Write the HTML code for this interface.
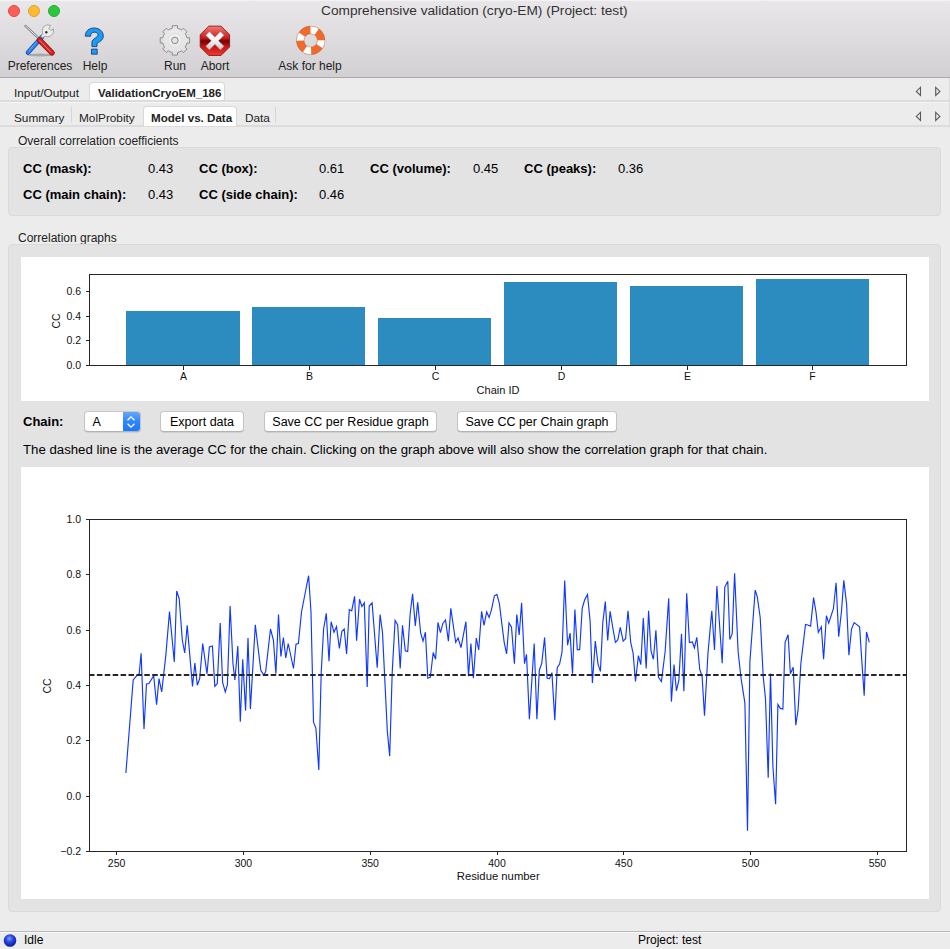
<!DOCTYPE html>
<html><head><meta charset="utf-8">
<style>
*{box-sizing:border-box}
html,body{margin:0;padding:0;width:950px;height:949px;overflow:hidden;background:#ececec;font-family:"Liberation Sans",sans-serif;color:#000}
.a{position:absolute;white-space:nowrap}
#toolbar{position:absolute;left:0;top:0;width:950px;height:78px;background:linear-gradient(#e9e7e9,#d2d0d2);border-bottom:1px solid #a9a7a9;box-shadow:inset 0 1px 0 #f4f3f4}
.tl{position:absolute;top:5px;width:12px;height:12px;border-radius:50%}
.lbl{position:absolute;top:59px;font-size:12px;color:#222;text-align:center}
#tabs1{position:absolute;left:0;top:78px;width:950px;height:24px;background:#ececec;border-bottom:2px solid #dcdcdc}
#tabs2{position:absolute;left:0;top:102px;width:950px;height:25px;background:#ececec;border-top:1px solid #f6f6f6;border-bottom:2px solid #dcdcdc}
.tab{position:absolute;font-size:11.8px;color:#222}
.atab{position:absolute;background:#fff;border:1px solid #d8d8d8;border-bottom:none;border-radius:4px 4px 0 0}
.grp{position:absolute;background:#e3e3e3;border:1px solid #dadada;border-radius:4px}
.gt{position:absolute;font-size:12px;color:#222}
.panel{position:absolute;background:#fff}
.b{font-weight:bold}
.cc{position:absolute;font-size:13px}
.tk{font-size:10.5px;fill:#111;font-family:"Liberation Sans",sans-serif}
.btn{position:absolute;height:21px;background:#fff;border:1px solid #c3c3c3;border-radius:4px;font-size:12.5px;text-align:center;line-height:20px;box-shadow:0 0.5px 0.5px #bdbdbd;border-color:#c8c8c8 #c3c3c3 #b3b3b3}
</style></head>
<body>
<div id="toolbar">
  <div class="tl" style="left:8px;background:#fc5f57;border:1px solid #df4744"></div>
  <div class="tl" style="left:28px;background:#fdbc2e;border:1px solid #de9f34"></div>
  <div class="tl" style="left:48px;background:#29c83f;border:1px solid #27aa35"></div>
  <div class="a" style="left:321px;top:3px;font-size:13.7px;color:#333">Comprehensive validation (cryo-EM) (Project: test)</div>
  <svg class="a" style="left:0;top:0" width="400" height="78">
<defs>
<linearGradient id="gBlue" x1="0" y1="0" x2="1" y2="1"><stop offset="0" stop-color="#4aa0ff"/><stop offset="1" stop-color="#0b4fc4"/></linearGradient>
<linearGradient id="gRed" x1="0" y1="0" x2="1" y2="0"><stop offset="0" stop-color="#f04848"/><stop offset="1" stop-color="#a80d0d"/></linearGradient>
<radialGradient id="gGear" cx="0.5" cy="0.45" r="0.6"><stop offset="0" stop-color="#f6f6f6"/><stop offset="1" stop-color="#dadada"/></radialGradient>
<linearGradient id="gOct" x1="0" y1="0" x2="0" y2="1"><stop offset="0" stop-color="#f47a7a"/><stop offset="0.42" stop-color="#c81818"/><stop offset="0.51" stop-color="#6a0000"/><stop offset="0.66" stop-color="#c01010"/><stop offset="1" stop-color="#f03a30"/></linearGradient>
<linearGradient id="gX" x1="0" y1="0" x2="0" y2="1"><stop offset="0" stop-color="#ffffff"/><stop offset="0.5" stop-color="#f4f4f4"/><stop offset="1" stop-color="#c4c4c4"/></linearGradient>
<radialGradient id="gBall" cx="0.4" cy="0.35" r="0.65"><stop offset="0" stop-color="#6f8dff"/><stop offset="0.5" stop-color="#1d3fe0"/><stop offset="1" stop-color="#0a1a90"/></radialGradient>
</defs>
<!-- preferences -->
<ellipse cx="40" cy="55" rx="13" ry="1.5" fill="#000" opacity="0.22"/>
<line x1="25.5" y1="26" x2="39.5" y2="39" stroke="#707070" stroke-width="2.3" stroke-linecap="round"/>
<line x1="25.5" y1="26" x2="39.5" y2="39" stroke="#f4f4f4" stroke-width="1" stroke-linecap="round"/>
<line x1="42" y1="37" x2="28" y2="52.5" stroke="#0a4ab8" stroke-width="4.6" stroke-linecap="round"/>
<line x1="42" y1="37" x2="28" y2="52.5" stroke="#2f86f0" stroke-width="3" stroke-linecap="round"/>
<line x1="40.5" y1="37.8" x2="29" y2="50.5" stroke="#8cc4ff" stroke-width="0.8" opacity="0.7"/>
<path transform="translate(-1,0.3)" d="M44.5 26.5 Q47.5 23.5 51.5 25 L49.8 28.2 L51.8 30.2 L54.5 28.6 Q55.5 33 51.8 35.6 Q48.5 37.5 45.8 35.8 L43.6 37.6 L41.8 35.8 L43.8 33.6 Q42.2 30 44.5 26.5 Z" fill="#ececec" stroke="#8a8a8a" stroke-width="0.7"/>
<circle cx="46.3" cy="32.3" r="1.2" fill="#333"/>
<line x1="39.5" y1="40" x2="52" y2="52.8" stroke="#8a0a0a" stroke-width="5.4" stroke-linecap="round"/>
<line x1="39.5" y1="40" x2="52" y2="52.8" stroke="#d82424" stroke-width="4" stroke-linecap="round"/>
<line x1="39.5" y1="40.3" x2="51" y2="52.2" stroke="#ffb0b0" stroke-width="0.7" opacity="0.85"/>
<!-- help -->
<g transform="translate(75,20)">
<path d="M10.3 16.2 C10.3 11 14 8 19 8 C24.5 8 28.3 11.5 28.3 16 C28.3 19.5 26 21 22 23.5 L22 26.6 L16.9 26.6 L16.9 22.5 C16.9 20 19 19 21 17.6 C22.5 16.5 23 15.8 23 14.8 C23 13 21.2 12.2 19.2 12.2 C17 12.2 15.6 13.8 15.6 16.2 Z" fill="#1a9cf4" stroke="#10306a" stroke-width="0.8"/>
<path d="M16.5 29.1 H22.2 V34.2 H16.5 Z" fill="#1a9cf4" stroke="#10306a" stroke-width="0.8"/>
</g>
<!-- run gear -->
<g transform="translate(174.9,40.4)">
<path d="M-2.60 -12.12 L-2.60 -14.70 L2.60 -14.70 L2.60 -12.12 A12.4 12.4 0 0 1 6.73 -10.41 L6.73 -10.41 L8.56 -12.23 L12.23 -8.56 L10.41 -6.73 A12.4 12.4 0 0 1 12.12 -2.60 L12.12 -2.60 L14.70 -2.60 L14.70 2.60 L12.12 2.60 A12.4 12.4 0 0 1 10.41 6.73 L10.41 6.73 L12.23 8.56 L8.56 12.23 L6.73 10.41 A12.4 12.4 0 0 1 2.60 12.12 L2.60 12.12 L2.60 14.70 L-2.60 14.70 L-2.60 12.12 A12.4 12.4 0 0 1 -6.73 10.41 L-6.73 10.41 L-8.56 12.23 L-12.23 8.56 L-10.41 6.73 A12.4 12.4 0 0 1 -12.12 2.60 L-12.12 2.60 L-14.70 2.60 L-14.70 -2.60 L-12.12 -2.60 A12.4 12.4 0 0 1 -10.41 -6.73 L-10.41 -6.73 L-12.23 -8.56 L-8.56 -12.23 L-6.73 -10.41 A12.4 12.4 0 0 1 -2.60 -12.12 Z" fill="url(#gGear)" stroke="#858585" stroke-width="0.9" stroke-linejoin="round"/>
<circle r="7.2" fill="none" stroke="#e2e2e2" stroke-width="1.6"/>
<circle r="3.3" fill="#e4e4e4" stroke="#7a7a7a" stroke-width="0.9"/>
</g>
<!-- abort -->
<g transform="translate(214.9,40.8)">
<polygon points="-6.1,-14.7 6.1,-14.7 14.7,-6.1 14.7,6.1 6.1,14.7 -6.1,14.7 -14.7,6.1 -14.7,-6.1" stroke-linejoin="round" fill="url(#gOct)" stroke="#7a1010" stroke-width="0.8"/>
<path d="M-8.5 -5.2 L-5.2 -8.5 L0 -3.3 L5.2 -8.5 L8.5 -5.2 L3.3 0 L8.5 5.2 L5.2 8.5 L0 3.3 L-5.2 8.5 L-8.5 5.2 L-3.3 0 Z" fill="url(#gX)" stroke="#b8b8b8" stroke-width="0.4" transform="scale(1.06)"/>
</g>
<!-- lifebuoy -->
<g transform="translate(310.7,40.4)">
<circle r="10.5" fill="none" stroke="#f06a2c" stroke-width="7.6"/>
<circle r="10.5" fill="none" stroke="#ffffff" stroke-width="7.6" stroke-dasharray="6.6 9.89" stroke-dashoffset="3.3" transform="rotate(15)"/>
<circle r="14.3" fill="none" stroke="#a05a40" stroke-width="0.6" opacity="0.6"/>
<circle r="6.7" fill="none" stroke="#a05a40" stroke-width="0.6" opacity="0.6"/>
</g>
</svg>
  <div class="lbl" style="left:0;width:80px">Preferences</div>
  <div class="lbl" style="left:75px;width:40px">Help</div>
  <div class="lbl" style="left:155px;width:40px">Run</div>
  <div class="lbl" style="left:190px;width:50px">Abort</div>
  <div class="lbl" style="left:260px;width:100px">Ask for help</div>
</div>
<div id="tabs1">
  <div class="tab" style="left:14px;top:8px">Input/Output</div>
  <div class="atab" style="left:89px;top:4px;width:136px;height:18px"></div>
  <div class="tab b" style="left:98px;top:9px;font-size:11.5px">ValidationCryoEM_186</div>
</div>
<div id="tabs2">
  <div class="tab" style="left:14px;top:8px">Summary</div>
  <div style="position:absolute;left:71px;top:4px;width:1px;height:16px;background:#d6d6d6"></div>
  <div class="tab" style="left:79px;top:8px">MolProbity</div>
  <div class="atab" style="left:143px;top:3px;width:94px;height:20px"></div>
  <div class="tab b" style="left:151px;top:8px;font-size:11.6px">Model vs. Data</div>
  <div class="tab" style="left:245px;top:8px">Data</div>
  <div style="position:absolute;left:275px;top:4px;width:1px;height:16px;background:#d6d6d6"></div>
</div>
<div class="gt" style="left:18px;top:134px">Overall correlation coefficients</div>
<div class="grp" style="left:8px;top:147px;width:933px;height:69px"></div>
<div class="cc b" style="left:23px;top:161px">CC (mask):</div>
<div class="cc" style="left:148px;top:161px">0.43</div>
<div class="cc b" style="left:199px;top:161px">CC (box):</div>
<div class="cc" style="left:319px;top:161px">0.61</div>
<div class="cc b" style="left:370px;top:161px">CC (volume):</div>
<div class="cc" style="left:473px;top:161px">0.45</div>
<div class="cc b" style="left:524px;top:161px">CC (peaks):</div>
<div class="cc" style="left:618px;top:161px">0.36</div>
<div class="cc b" style="left:23px;top:187px">CC (main chain):</div>
<div class="cc" style="left:148px;top:187px">0.43</div>
<div class="cc b" style="left:199px;top:187px">CC (side chain):</div>
<div class="cc" style="left:319px;top:187px">0.46</div>

<div class="gt" style="left:18px;top:231px">Correlation graphs</div>
<div class="grp" style="left:8px;top:244px;width:933px;height:668px"></div>
<div class="panel" style="left:21px;top:257px;width:908px;height:144px"></div>
<div class="panel" style="left:21px;top:467px;width:908px;height:432px"></div>

<!--CHARTS-->
<svg class="a" style="left:0;top:0" width="950" height="949">
<rect x="126" y="311" width="114" height="54" fill="#2c8bbf"/>
<rect x="252" y="307" width="113" height="58" fill="#2c8bbf"/>
<rect x="378" y="318" width="113" height="47" fill="#2c8bbf"/>
<rect x="504" y="282" width="113" height="83" fill="#2c8bbf"/>
<rect x="630" y="286" width="113" height="79" fill="#2c8bbf"/>
<rect x="756" y="279" width="113" height="86" fill="#2c8bbf"/>
<rect x="89.5" y="274.5" width="817" height="91" fill="none" stroke="#262626" stroke-width="1"/>
<line x1="86" y1="365.5" x2="89.5" y2="365.5" stroke="#262626"/>
<text x="81" y="369.3" text-anchor="end" class="tk">0.0</text>
<line x1="86" y1="340.5" x2="89.5" y2="340.5" stroke="#262626"/>
<text x="81" y="344.3" text-anchor="end" class="tk">0.2</text>
<line x1="86" y1="316.5" x2="89.5" y2="316.5" stroke="#262626"/>
<text x="81" y="320.3" text-anchor="end" class="tk">0.4</text>
<line x1="86" y1="291.5" x2="89.5" y2="291.5" stroke="#262626"/>
<text x="81" y="295.3" text-anchor="end" class="tk">0.6</text>
<line x1="183.5" y1="365.5" x2="183.5" y2="370" stroke="#262626"/>
<text x="183.5" y="380" text-anchor="middle" class="tk">A</text>
<line x1="309.5" y1="365.5" x2="309.5" y2="370" stroke="#262626"/>
<text x="309.5" y="380" text-anchor="middle" class="tk">B</text>
<line x1="435.5" y1="365.5" x2="435.5" y2="370" stroke="#262626"/>
<text x="435.5" y="380" text-anchor="middle" class="tk">C</text>
<line x1="561.5" y1="365.5" x2="561.5" y2="370" stroke="#262626"/>
<text x="561.5" y="380" text-anchor="middle" class="tk">D</text>
<line x1="687.5" y1="365.5" x2="687.5" y2="370" stroke="#262626"/>
<text x="687.5" y="380" text-anchor="middle" class="tk">E</text>
<line x1="812.5" y1="365.5" x2="812.5" y2="370" stroke="#262626"/>
<text x="812.5" y="380" text-anchor="middle" class="tk">F</text>
<text x="498" y="394" text-anchor="middle" class="tk" style="font-size:11px">Chain ID</text>
<text transform="translate(60,321) rotate(-90)" text-anchor="middle" class="tk">CC</text>
<rect x="89.5" y="519.5" width="817" height="332" fill="none" stroke="#262626" stroke-width="1"/>
<line x1="86" y1="519.5" x2="89.5" y2="519.5" stroke="#262626"/>
<text x="81" y="523.3" text-anchor="end" class="tk">1.0</text>
<line x1="86" y1="574.5" x2="89.5" y2="574.5" stroke="#262626"/>
<text x="81" y="578.3" text-anchor="end" class="tk">0.8</text>
<line x1="86" y1="630.5" x2="89.5" y2="630.5" stroke="#262626"/>
<text x="81" y="634.3" text-anchor="end" class="tk">0.6</text>
<line x1="86" y1="685.5" x2="89.5" y2="685.5" stroke="#262626"/>
<text x="81" y="689.3" text-anchor="end" class="tk">0.4</text>
<line x1="86" y1="740.5" x2="89.5" y2="740.5" stroke="#262626"/>
<text x="81" y="744.3" text-anchor="end" class="tk">0.2</text>
<line x1="86" y1="796.5" x2="89.5" y2="796.5" stroke="#262626"/>
<text x="81" y="800.3" text-anchor="end" class="tk">0.0</text>
<line x1="86" y1="851.5" x2="89.5" y2="851.5" stroke="#262626"/>
<text x="81" y="855.3" text-anchor="end" class="tk">−0.2</text>
<line x1="116.5" y1="851.5" x2="116.5" y2="855" stroke="#262626"/>
<text x="116.6" y="866.5" text-anchor="middle" class="tk">250</text>
<line x1="243.5" y1="851.5" x2="243.5" y2="855" stroke="#262626"/>
<text x="243.39999999999998" y="866.5" text-anchor="middle" class="tk">300</text>
<line x1="370.5" y1="851.5" x2="370.5" y2="855" stroke="#262626"/>
<text x="370.2" y="866.5" text-anchor="middle" class="tk">350</text>
<line x1="497.5" y1="851.5" x2="497.5" y2="855" stroke="#262626"/>
<text x="497.0" y="866.5" text-anchor="middle" class="tk">400</text>
<line x1="623.5" y1="851.5" x2="623.5" y2="855" stroke="#262626"/>
<text x="623.8" y="866.5" text-anchor="middle" class="tk">450</text>
<line x1="750.5" y1="851.5" x2="750.5" y2="855" stroke="#262626"/>
<text x="750.6" y="866.5" text-anchor="middle" class="tk">500</text>
<line x1="877.5" y1="851.5" x2="877.5" y2="855" stroke="#262626"/>
<text x="877.4" y="866.5" text-anchor="middle" class="tk">550</text>
<text x="498.2" y="880" text-anchor="middle" class="tk" style="font-size:11.3px">Residue number</text>
<text transform="translate(51,686) rotate(-90)" text-anchor="middle" class="tk">CC</text>
<polyline points="125.9,773 133.2,679.9 136.8,675.7 139.2,673.8 141.1,653.2 144,729 146.5,684 148.9,683.5 153.7,675.7 156.6,704.8 159,678.6 161.7,692 165.8,655.6 169.5,611.6 174.3,662 176.7,591 179.2,598.7 182.3,640 184.7,653 187.2,625.4 192.5,686.4 194.9,663 197.3,685.2 199.7,678.6 202.7,643.5 207,673.8 209.4,647 212.4,646 214.8,686.4 217.3,683.5 220.2,623 222.6,682.3 225.3,692 227.4,684.7 230.1,606 233,664 234.9,679.9 237.8,646 240.3,721.7 242.7,659.3 245.6,710.6 248,638 250.4,708.9 255.3,624.9 260.8,670.2 263.8,675 265.7,671.4 270.5,629 273.4,640 275.9,673.8 278.5,614.5 280.9,656.4 283.4,637.5 285.8,658 288.2,643.5 293.5,668.5 296,644.3 298.4,643.5 301.5,612 305,594 308.6,575.7 311,612 313.5,722 315.9,728.3 318.8,770 321.2,672.6 323.6,629 326.3,613.3 329,661.2 331.1,621.7 334,632.2 336.5,626.6 339.4,648.4 341.8,631.4 344.2,629 346.6,654 349.3,609.6 351.7,610.8 354.6,596.3 356.6,640.6 359.5,599.2 361.9,606.5 364.3,602.9 367.2,687 369.2,606 372.1,602.9 377.2,667.7 380.1,614.5 382.5,632.6 387.3,730.7 389.7,756.1 392.2,672.6 395.1,620.5 397.7,624.9 400.2,668.5 402.5,625.4 405.3,650.8 407.7,651.5 410.2,613.3 412.6,593.9 415.3,625.9 417.7,602.4 420.6,632.6 423,641.1 425.4,632.2 427.8,678.2 430.3,677.4 433.2,652.5 435.6,659.3 438,622.5 440.4,632.6 442.9,623.4 445.5,620 448.4,641.1 450.8,608.4 455.7,642.3 458.1,638 461,647.7 465.9,621.7 468.5,676.2 470.9,643.5 473.4,678.2 476.3,638 478.7,650 481.6,611.3 484,625.4 486.7,612 489.1,617.4 491.5,609.6 494.4,595.8 496.9,594.4 499.4,603.6 501.8,623.4 504.2,642.3 506.6,654 509,623 511.5,627.3 514.4,663.6 516.8,614.5 519.2,635 521.6,602.9 524.5,663.6 526.5,654.4 529.4,719.3 534.2,643.5 536.9,719.3 539.3,670.2 541.7,663.6 544.6,637.5 547.1,678.2 549.5,678.6 551.9,672.6 554.8,720.3 557.2,667.7 559.6,664.1 562.1,651.5 564.7,580.6 567.6,645.2 570.1,633.1 572.5,673.8 574.9,609.6 577.3,649.6 579.7,649.6 582.2,608.4 584.6,600 587.5,594.4 590.1,621 592.4,683 595.3,641.1 598,664.1 600.4,671.4 602.8,622.5 605.3,601.6 607.7,640.4 610.1,611.3 613,629 615.4,642.3 617.8,639.9 620.3,627.3 623.2,641.1 625.6,638.7 628,610.8 630.7,642.3 633.1,653.2 635.5,681.5 638.4,655.6 640.8,664.6 643.3,618.1 646.2,668.5 648.6,610.8 651,650.8 653.4,659.3 655.9,630.2 658.5,677.4 661.4,681.5 665.1,652 668.7,598.3 671.4,701.6 674,664.6 676.4,690.8 678.9,679.9 681.5,633.8 683.9,691.2 686.7,593.2 689.4,642.6 692.4,642 694.4,647.9 696.8,637.3 699.7,669.1 702.1,676.5 704.5,715.8 708,652.9 711.8,610.7 714.5,650 716.9,586 722.2,663.2 724.8,587.1 727.8,581.2 729.8,639.6 732.2,633.7 734.6,573.3 738.1,651.4 741,678 744.9,703.1 747.5,830.8 749.9,661.8 755.2,590.1 757.3,596.9 760.2,617.5 763.2,676.5 765.5,698.6 768.2,777.7 770.5,673.6 772.9,766.5 775.6,804.2 777.9,704.5 780.3,708.4 782.9,709 785.1,642.4 788.1,634.7 790.4,673.7 793.2,667.2 795.8,725.2 798.1,709.7 800.9,663.2 805.5,624.5 807.8,625 810.6,626.1 813.6,597.6 816,612.2 818.3,632.4 821.3,626.8 823.6,659.3 826.4,615.7 828.7,623.1 833.4,608.7 836.1,582.7 838.7,636.6 841.5,611 843.8,580.4 846.6,604.1 848.9,655.1 851.5,629.1 854.2,622.6 859.6,626.8 861.9,662.1 864.2,695.7 866.5,631.9 869.3,642.4" fill="none" stroke="#1038ff" stroke-width="1.15" stroke-linejoin="miter"/>
<line x1="89" y1="675" x2="906" y2="675" stroke="#262626" stroke-width="1.8" stroke-dasharray="5.5 2.4"/>
</svg>
<!--/CHARTS-->
<div class="cc b" style="left:23px;top:414px">Chain:</div>
<div class="btn" style="left:83.5px;top:411px;width:57px;text-align:left;padding-left:8px;overflow:hidden">A<div style="position:absolute;right:-1px;top:-1px;width:18px;height:21px;background:linear-gradient(#6aaafb,#2f86fb 50%,#1a77fa);border-radius:0 4px 4px 0"></div>
<svg class="a" style="left:38.5px;top:0" width="17" height="20"><g fill="none" stroke="#fff" stroke-width="1.3"><path d="M4.5 8.3 L8 4.9 L11.5 8.3"/><path d="M4.5 11.7 L8 15.1 L11.5 11.7"/></g></svg></div>
<div class="btn" style="left:160px;top:411px;width:84px">Export data</div>
<div class="btn" style="left:264px;top:411px;width:173px">Save CC per Residue graph</div>
<div class="btn" style="left:457px;top:411px;width:160px">Save CC per Chain graph</div>
<div class="cc" style="left:23px;top:442px;font-size:13.23px">The dashed line is the average CC for the chain. Clicking on the graph above will also show the correlation graph for that chain.</div>

<div style="position:absolute;left:0;top:931px;width:950px;height:18px;background:#ececec;border-top:1px solid #b9b9b9;box-shadow:inset 0 1px 0 #f8f8f8"></div>
<svg class="a" style="left:900px;top:78px" width="50" height="50">
<g fill="none" stroke="#5a5a5a" stroke-width="1.1" stroke-linejoin="miter">
<path d="M20.5 9.4 L16.3 13.4 L20.5 17.4 Z"/><path d="M35.7 9.4 L39.9 13.4 L35.7 17.4 Z"/>
<path d="M20.5 34.4 L16.3 38.4 L20.5 42.4 Z"/><path d="M35.7 34.4 L39.9 38.4 L35.7 42.4 Z"/>
</g></svg>
<div style="position:absolute;left:949px;top:78px;width:1px;height:49px;background:#dadada"></div>
<svg class="a" style="left:0;top:925px" width="30" height="24">
<defs><radialGradient id="gBall2" cx="0.45" cy="0.35" r="0.65"><stop offset="0" stop-color="#7f9bff"/><stop offset="0.45" stop-color="#2546e6"/><stop offset="1" stop-color="#0a1c8c"/></radialGradient></defs>
<circle cx="10" cy="15.5" r="6.3" fill="url(#gBall2)"/>
</svg>
<div class="a" style="left:24px;top:933px;font-size:12px">Idle</div>
<div class="a" style="left:638px;top:933px;font-size:12px">Project: test</div>
</body></html>
